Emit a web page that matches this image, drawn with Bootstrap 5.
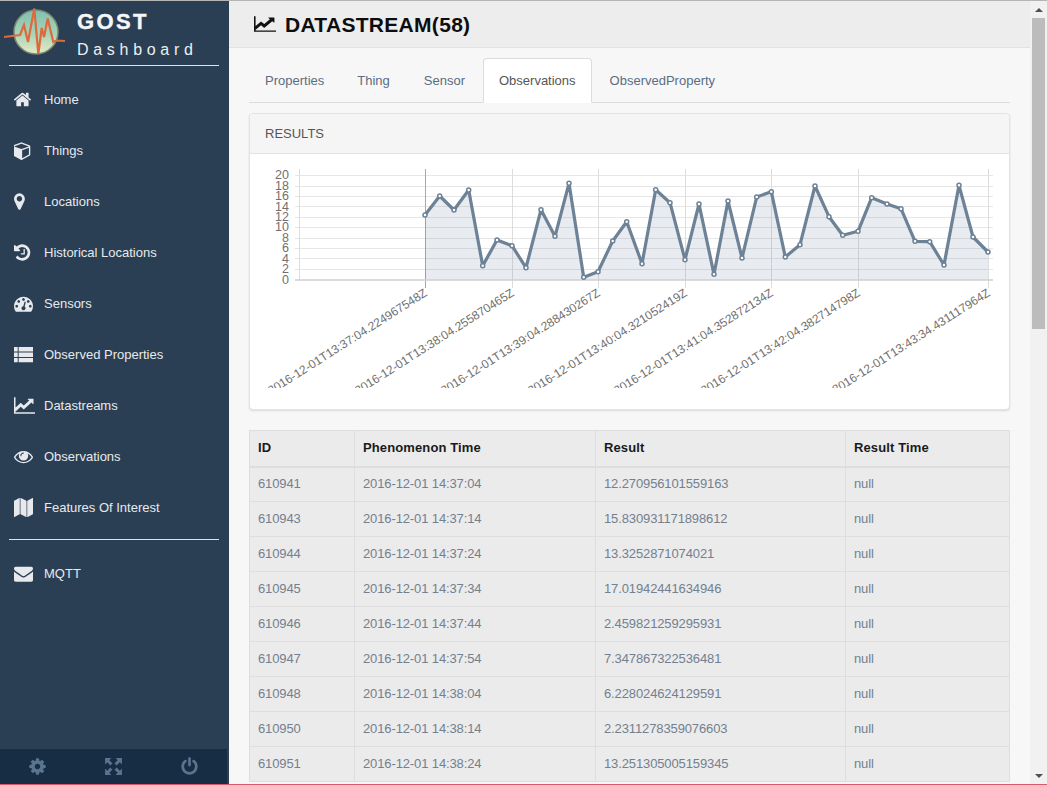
<!DOCTYPE html>
<html lang="en"><head><meta charset="utf-8"><title>GOST Dashboard</title>
<link rel="stylesheet" href="https://cdn.jsdelivr.net/npm/bootstrap@5.3.0/dist/css/bootstrap.min.css">
<style>
html,body{height:785px;overflow:hidden}
body{font-family:"Liberation Sans",Arial,sans-serif;font-size:13px;background:#f7f7f7;border-top:1px solid #b5b5b5;border-bottom:1px solid #d9596a}
.shell{height:783px}
.side{width:229px;background:#2a3f54;color:#ecf0f1}
.brand{height:64px}
.brand svg{width:74px;height:60px;flex:none}
.brand-txt{margin-left:3px;padding-top:8px}
.b-t{font-size:22px;font-weight:700;line-height:26px;letter-spacing:2.4px;color:#f4f6f7;-webkit-text-stroke:.4px #f4f6f7}
.b-s{font-size:16px;line-height:18px;margin-top:6px;letter-spacing:4.7px;color:#ecf0f1}
.rule{height:1px;background:#dfe3e6;margin:0 10px 0 9px;flex:none}
.rule.low{margin-top:6px}
.mnu{padding-top:8px}
.mi{height:51px;color:#e7e9ec;font-size:13px;text-decoration:none;padding-left:14px}
.mi svg{fill:#e7e9ec;width:19px;height:19px;flex:none;margin-right:11px}
.mi svg.wide{width:21px;margin-right:9px}
.sfoot{height:35px;background:#172d44;width:227px}
.sfoot svg{fill:#5a738e;width:19px;height:19px}
.sfoot span{width:76px}
.mainp{width:801px}
.head{height:47px;background:#ededed;border-bottom:1px solid #e2e2e2;padding-left:25px;flex:none}
.head svg{width:22px;height:18px;margin-right:9px;fill:#111}
.head h1{font-size:21px;font-weight:700;margin:1px 0 0;color:#0d0d0d;letter-spacing:.3px}
.wrap{padding:10px 20px 0;overflow:hidden}
.nav-tabs{border-bottom-color:#dcdcdc}
.nav-tabs .nav-link{font-size:13px;color:#5a6d82;padding:0 15px;height:45px;line-height:44px;margin-right:2px;border-radius:4px 4px 0 0}
.nav-tabs .nav-item:first-child .nav-link{margin-right:1px}
.nav-tabs .nav-link.active{color:#555;background:#fff;border-color:#dcdcdc #dcdcdc #fff}
.pnl{margin-top:10px;border-color:#e3e3e3;border-radius:4px;box-shadow:0 1px 2px rgba(0,0,0,.12);height:297px;flex:none}
.pnl .card-header{height:40px;padding:0 15px;line-height:39px;font-size:13px;color:#555;background:#f5f5f5;border-bottom-color:#e3e3e3}
.pnl svg{display:block}
.gl{stroke:#e6e6e6;stroke-width:1}
.gv{stroke:#dcdcdc;stroke-width:1}
.tk{font:12.5px "Liberation Sans",Arial,sans-serif;fill:#707070}
.tx{font:12px "Liberation Sans",Arial,sans-serif;fill:#707070}
.dtab{margin:20px 0 0;width:760px;table-layout:fixed;font-size:13px;--bs-table-bg:#ebebeb;--bs-table-color:#73808f;border-color:#dedede}
.dtab th{height:36px;padding:0 8px 2px;color:#1a1a1a;vertical-align:middle;border-bottom-width:2px;letter-spacing:.12px}
.dtab td{height:35px;padding:0 8px;vertical-align:middle;letter-spacing:-.12px}
.dtab tbody tr:first-child td{padding-bottom:2px}
.dtab thead tr{border-color:#dedede}
.sb{width:17px;background:#f1f1f1}
.sb-up,.sb-dn{height:17px;flex:none}
.sb-up i,.sb-dn i{width:0;height:0;border-left:4px solid transparent;border-right:4px solid transparent;display:block}
.sb-up i{border-bottom:4px solid #505050}
.sb-dn i{border-top:4px solid #505050}
.sb-th{width:13px;height:311px;background:#bcbcbc;margin:0 auto;flex:none}
</style></head>
<body>
<svg width="0" height="0" class="position-absolute">
<symbol id="i-home" viewBox="97 0 1792 1792"><path d="M1472 992v480q0 26-19 45t-45 19h-384v-384h-256v384h-384q-26 0-45-19t-19-45v-480q0-1 .5-3t.5-3l575-474 575 474q1 2 1 6zm223-69l-62 74q-8 9-21 11h-3q-13 0-21-7l-692-577-692 577q-12 8-24 7-13-2-21-11l-62-74q-8-10-7-23.5t11-21.5l719-599q32-26 76-26t76 26l244 204v-195q0-14 9-23t23-9h192q14 0 23 9t9 23v408l219 182q10 8 11 21.5t-7 23.5z"/></symbol>
<symbol id="i-cube" viewBox="128 0 1792 1792"><path d="M896 1629l640-349v-636l-640 233v752zm-64-865l698-254-698-254-698 254zm832-252v768q0 35-18 65t-49 47l-704 384q-28 16-61 16t-61-16l-704-384q-31-17-49-47t-18-65v-768q0-40 23-73t61-47l704-256q22-8 44-8t44 8l704 256q38 14 61 47t23 73z"/></symbol>
<symbol id="i-pin" viewBox="384 0 1792 1792"><path d="M1152 640q0-106-75-181t-181-75-181 75-75 181 75 181 181 75 181-75 75-181zm256 0q0 109-33 179l-364 774q-16 33-47.5 52t-67.5 19-67.5-19-46.5-52l-365-774q-33-70-33-179 0-212 150-362t362-150 362 150 150 362z"/></symbol>
<symbol id="i-hist" viewBox="128 0 1792 1792"><path d="M1664 896q0 156-61 298t-164 245-245 164-298 61q-172 0-327-72.5t-264-204.5q-7-10-6.5-22.5t8.5-20.5l137-138q10-9 25-9 16 2 23 12 73 95 179 147t225 52q104 0 198.5-40.5t163.5-109.5 109.5-163.5 40.5-198.5-40.5-198.5-109.5-163.5-163.5-109.5-198.5-40.5q-98 0-188 35.5t-160 101.5l137 138q31 30 14 69-17 40-59 40h-448q-26 0-45-19t-19-45v-448q0-42 40-59 39-17 69 14l130 129q107-101 244.5-156.5t284.5-55.5q156 0 298 61t245 164 164 245 61 298zm-512-288v448q0 14-9 23t-23 9h-320q-14 0-23-9t-9-23v-64q0-14 9-23t23-9h224v-352q0-14 9-23t23-9h64q14 0 23 9t9 23z"/></symbol>
<symbol id="i-dash" viewBox="0 0 1792 1792"><path d="M384 1152q0-53-37.5-90.5t-90.5-37.5-90.5 37.5-37.5 90.5 37.5 90.5 90.5 37.5 90.5-37.5 37.5-90.5zm192-448q0-53-37.5-90.5t-90.5-37.5-90.5 37.5-37.5 90.5 37.5 90.5 90.5 37.5 90.5-37.5 37.5-90.5zm428 481l101-382q6-26-7.5-48.5t-38.5-29.5-48 6.5-30 39.5l-101 382q-60 5-107 43.5t-63 98.5q-20 77 20 146t117 89 146-20 89-117q16-60-6-117t-72-91zm660-33q0-53-37.5-90.5t-90.5-37.5-90.5 37.5-37.5 90.5 37.5 90.5 90.5 37.5 90.5-37.5 37.5-90.5zm-640-640q0-53-37.5-90.5t-90.5-37.5-90.5 37.5-37.5 90.5 37.5 90.5 90.5 37.5 90.5-37.5 37.5-90.5zm448 192q0-53-37.5-90.5t-90.5-37.5-90.5 37.5-37.5 90.5 37.5 90.5 90.5 37.5 90.5-37.5 37.5-90.5zm320 448q0 261-141 483-19 29-54 29h-1402q-35 0-54-29-141-221-141-483 0-182 71-348t191-286 286-191 348-71 348 71 286 191 191 286 71 348z"/></symbol>
<symbol id="i-list" viewBox="0 0 1792 1792"><path d="M0 196h350v420H0zM440 196h1352v420H440zM0 706h350v420H0zM440 706h1352v420H440zM0 1216h350v420H0zM440 1216h1352v420H440z"/></symbol>
<symbol id="i-line" viewBox="0 0 1792 1792" preserveAspectRatio="none"><path d="M1792 1536v128h-1792v-1536h128v1408h1664zm-128-1248v435q0 21-19.5 29.5t-35.5-7.5l-121-121-633 633q-10 10-23 10t-23-10l-233-233-416 416-192-192 585-585q10-10 23-10t23 10l233 233 464-464-121-121q-16-16-7.5-35.5t29.5-19.5h435q14 0 23 9t9 23z"/></symbol>
<symbol id="i-eye" viewBox="0 0 1792 1792"><path d="M1664 960q-152-236-381-353 61 104 61 225 0 185-131.5 316.5t-316.5 131.5-316.5-131.5-131.5-316.5q0-121 61-225-229 117-381 353 133 205 333.5 326.5t434.5 121.5 434.5-121.5 333.5-326.5zm-720-384q0-20-14-34t-34-14q-125 0-214.5 89.5t-89.5 214.5q0 20 14 34t34 14 34-14 14-34q0-86 61-147t147-61q20 0 34-14t14-34zm848 384q0 34-20 69-140 230-376.5 368.5t-499.5 138.5-499.5-139-376.5-368q-20-35-20-69t20-69q140-229 376.5-368t499.5-139 499.5 139 376.5 368q20 35 20 69z"/></symbol>
<symbol id="i-map" viewBox="0 0 1792 1792"><path d="M512 0q13 0 22.5 9.5t9.5 22.5v1472q0 20-17 28l-480 256q-7 4-15 4-13 0-22.5-9.5t-9.5-22.5v-1472q0-20 17-28l480-256q7-4 15-4zm1248 0q13 0 22.5 9.5t9.5 22.5v1472q0 20-17 28l-480 256q-7 4-15 4-13 0-22.5-9.5t-9.5-22.5v-1472q0-20 17-28l480-256q7-4 15-4zm-1120 0q8 0 14 3l512 256q18 10 18 29v1472q0 13-9.5 22.5t-22.5 9.5q-8 0-14-3l-512-256q-18-10-18-29v-1472q0-13 9.5-22.5t22.5-9.5z"/></symbol>
<symbol id="i-mail" viewBox="0 0 1792 1792"><path d="M1792 710v794q0 66-47 113t-113 47h-1472q-66 0-113-47t-47-113v-794q44 49 101 87 362 246 497 345 57 42 92.5 65.5t94.5 48 110 24.5h2q51 0 110-24.5t94.5-48 92.5-65.5q170-123 498-345 57-39 100-87zm0-294q0 79-49 151t-122 123q-376 261-468 325-10 7-42.5 30.5t-54 38-52 32.5-57.5 27-50 9h-2q-23 0-50-9t-57.5-27-52-32.5-54-38-42.5-30.5q-91-64-262-182.5t-205-142.5q-62-42-117-115.5t-55-136.5q0-78 41.5-130t118.5-52h1472q65 0 112.5 45t47.5 115z"/></symbol>
<symbol id="i-cog" viewBox="0 0 1792 1792"><path d="M1152 896q0-106-75-181t-181-75-181 75-75 181 75 181 181 75 181-75 75-181zm512-109v222q0 12-8 23t-20 13l-185 28q-19 54-39 91 35 50 107 138 10 12 10 25t-9 23q-27 37-99 108t-94 71q-12 0-26-9l-138-108q-44 23-91 38-16 136-29 186-7 28-36 28h-222q-14 0-24.5-8.5t-11.5-21.5l-28-184q-49-16-90-37l-141 107q-10 9-25 9-14 0-25-11-126-114-165-168-7-10-7-23 0-12 8-23 15-21 51-66.5t54-70.5q-27-50-41-99l-183-27q-13-2-21-12.5t-8-23.5v-222q0-12 8-23t19-13l186-28q14-46 39-92-40-57-107-138-10-12-10-24 0-10 9-23 26-36 98.5-107.5t94.5-71.5q13 0 26 10l138 107q44-23 91-38 16-136 29-186 7-28 36-28h222q14 0 24.5 8.5t11.5 21.5l28 184q49 16 90 37l142-107q9-9 24-9 13 0 25 10 129 119 165 170 7 8 7 22 0 12-8 23-15 21-51 66.5t-54 70.5q26 50 41 98l183 28q13 2 21 12.5t8 23.5z"/></symbol>
<symbol id="i-full" viewBox="0 0 18 18"><path d="M1 1h6L5 3l3 3-2 2-3-3-2 2zM17 1v6l-2-2-3 3-2-2 3-3-2-2zM1 17v-6l2 2 3-3 2 2-3 3 2 2zM17 17h-6l2-2-3-3 2-2 3 3 2-2z"/></symbol>
<symbol id="i-pow" viewBox="0 0 1792 1792"><path d="M1664 896q0 156-61 298t-164 245-245 164-298 61-298-61-245-164-164-245-61-298q0-182 80.5-343t226.5-270q43-32 95.5-25t83.5 50q32 42 24.5 94.5t-49.5 84.5q-98 74-151.5 181t-53.5 228q0 104 40.5 198.5t109.5 163.5 163.5 109.5 198.5 40.5 198.5-40.5 163.5-109.5 109.5-163.5 40.5-198.5q0-121-53.5-228t-151.5-181q-42-32-49.5-84.5t24.5-94.5q31-43 84-50t95 25q146 109 226.5 270t80.5 343zm-640-768v640q0 52-38 90t-90 38-90-38-38-90v-640q0-52 38-90t90-38 90 38 38 90z"/></symbol>
</svg>
<div class="shell d-flex">
  <aside class="side d-flex flex-column flex-shrink-0">
    <div class="brand d-flex">
      <svg viewBox="0 0 74 60" aria-label="GOST logo">
        <defs><linearGradient id="lg" x1="0" y1="0" x2="0" y2="1"><stop offset="0" stop-color="#7fc0b0"/><stop offset=".55" stop-color="#a9d4b8"/><stop offset="1" stop-color="#e6eac6"/></linearGradient></defs>
        <circle cx="36" cy="31" r="22" fill="url(#lg)" stroke="#7c8a74" stroke-width="1.5"/>
        <polyline fill="none" stroke="#dc6a3c" stroke-width="2.2" points="4,36 20,34 24,24 28,41 34.300,7.500 38.300,53 41.700,27 44,36 47.700,17.500 53.300,41 56.700,39.500 65,40"/>
      </svg>
      <div class="brand-txt"><div class="b-t">GOST</div><div class="b-s">Dashboard</div></div>
    </div>
    <div class="rule"></div>
    <nav class="mnu nav flex-column flex-nowrap">
      <a class="mi d-flex align-items-center" href="#"><svg><use href="#i-home"/></svg>Home</a>
      <a class="mi d-flex align-items-center" href="#"><svg><use href="#i-cube"/></svg>Things</a>
      <a class="mi d-flex align-items-center" href="#"><svg><use href="#i-pin"/></svg>Locations</a>
      <a class="mi d-flex align-items-center" href="#"><svg><use href="#i-hist"/></svg>Historical Locations</a>
      <a class="mi d-flex align-items-center" href="#"><svg><use href="#i-dash"/></svg>Sensors</a>
      <a class="mi d-flex align-items-center" href="#"><svg><use href="#i-list"/></svg>Observed Properties</a>
      <a class="mi d-flex align-items-center" href="#"><svg class="wide"><use href="#i-line"/></svg>Datastreams</a>
      <a class="mi d-flex align-items-center" href="#"><svg><use href="#i-eye"/></svg>Observations</a>
      <a class="mi d-flex align-items-center" href="#"><svg><use href="#i-map"/></svg>Features Of Interest</a>
    </nav>
    <div class="rule low"></div>
    <nav class="mnu nav flex-column flex-nowrap">
      <a class="mi d-flex align-items-center" href="#"><svg><use href="#i-mail"/></svg>MQTT</a>
    </nav>
    <div class="sfoot d-flex align-items-center mt-auto">
      <span class="d-flex justify-content-center"><svg><use href="#i-cog"/></svg></span>
      <span class="d-flex justify-content-center"><svg><use href="#i-full"/></svg></span>
      <span class="d-flex justify-content-center"><svg><use href="#i-pow"/></svg></span>
    </div>
  </aside>
  <main class="mainp d-flex flex-column flex-shrink-0">
    <header class="head d-flex align-items-center"><svg><use href="#i-line"/></svg><h1>DATASTREAM(58)</h1></header>
    <div class="wrap flex-grow-1">
      <ul class="nav nav-tabs">
        <li class="nav-item"><a class="nav-link" href="#">Properties</a></li>
        <li class="nav-item"><a class="nav-link" href="#">Thing</a></li>
        <li class="nav-item"><a class="nav-link" href="#">Sensor</a></li>
        <li class="nav-item"><a class="nav-link active" href="#">Observations</a></li>
        <li class="nav-item"><a class="nav-link" href="#">ObservedProperty</a></li>
      </ul>
      <div class="card pnl">
        <div class="card-header">RESULTS</div>
        <div class="card-body p-0">
          <svg width="759" height="234" viewBox="250 154 759 234" aria-label="Results chart">
            <g>
              <line class="gl" x1="295" x2="993" y1="175.5" y2="175.5"/><line class="gl" x1="295" x2="993" y1="186.500" y2="186.500"/><line class="gl" x1="295" x2="993" y1="196.500" y2="196.500"/><line class="gl" x1="295" x2="993" y1="206.500" y2="206.500"/><line class="gl" x1="295" x2="993" y1="217.500" y2="217.500"/><line class="gl" x1="295" x2="993" y1="227.500" y2="227.500"/><line class="gl" x1="295" x2="993" y1="238.500" y2="238.500"/><line class="gl" x1="295" x2="993" y1="248.500" y2="248.500"/><line class="gl" x1="295" x2="993" y1="258.500" y2="258.500"/><line class="gl" x1="295" x2="993" y1="269.500" y2="269.500"/>
              <line class="gv" x1="299.500" x2="299.500" y1="169" y2="280"/><line class="gv" x1="512.500" x2="512.500" y1="169" y2="288"/><line class="gv" x1="598.500" x2="598.500" y1="169" y2="288"/><line class="gv" x1="685.500" x2="685.500" y1="169" y2="288"/><line class="gv" x1="771.500" x2="771.500" y1="169" y2="288"/><line class="gv" x1="858.500" x2="858.500" y1="169" y2="288"/><line class="gv" x1="988.500" x2="988.500" y1="169" y2="288"/>
              <line x1="425.500" x2="425.500" y1="169" y2="288" stroke="#a8a8a8"/>
            </g>
            <polygon fill="#5a738e" fill-opacity=".14" points="425,280 425,215 439.700,196 454,210 468.700,190 482.700,265.700 497,240 512,245.700 526,267.700 541,209.700 555,236.300 569,183.300 583.700,277.300 598,271.700 612.700,241 626.700,221.700 642,263.700 655.700,189.700 670,202.700 685,259.700 699,204 714,274.300 728,201 742,258 756.700,197 771.300,191.700 785.300,257 800,244.700 815,186 829,216.700 842.700,235.300 858,231.300 871.700,197.700 887,204 901,208.700 915,241.300 929.700,241.700 944,265 959,185.300 973,237 988,252 988,280"/>
            <line x1="295" x2="993" y1="280" y2="280" stroke="#cfcfcf" stroke-width="1.500"/>
            <polyline fill="none" stroke="#6d8296" stroke-width="3.200" stroke-linejoin="round" points="425,215 439.700,196 454,210 468.700,190 482.700,265.700 497,240 512,245.700 526,267.700 541,209.700 555,236.300 569,183.300 583.700,277.300 598,271.700 612.700,241 626.700,221.700 642,263.700 655.700,189.700 670,202.700 685,259.700 699,204 714,274.300 728,201 742,258 756.700,197 771.300,191.700 785.300,257 800,244.700 815,186 829,216.700 842.700,235.300 858,231.300 871.700,197.700 887,204 901,208.700 915,241.300 929.700,241.700 944,265 959,185.300 973,237 988,252"/>
            <g fill="#fff" stroke="#6d8296" stroke-width="1.500">
              <circle r="2" cx="425" cy="215"/><circle r="2" cx="439.700" cy="196"/><circle r="2" cx="454" cy="210"/><circle r="2" cx="468.700" cy="190"/><circle r="2" cx="482.700" cy="265.700"/><circle r="2" cx="497" cy="240"/><circle r="2" cx="512" cy="245.700"/><circle r="2" cx="526" cy="267.700"/><circle r="2" cx="541" cy="209.700"/><circle r="2" cx="555" cy="236.300"/><circle r="2" cx="569" cy="183.300"/><circle r="2" cx="583.700" cy="277.300"/><circle r="2" cx="598" cy="271.700"/><circle r="2" cx="612.700" cy="241"/><circle r="2" cx="626.700" cy="221.700"/><circle r="2" cx="642" cy="263.700"/><circle r="2" cx="655.700" cy="189.700"/><circle r="2" cx="670" cy="202.700"/><circle r="2" cx="685" cy="259.700"/><circle r="2" cx="699" cy="204"/><circle r="2" cx="714" cy="274.300"/><circle r="2" cx="728" cy="201"/><circle r="2" cx="742" cy="258"/><circle r="2" cx="756.700" cy="197"/><circle r="2" cx="771.300" cy="191.700"/><circle r="2" cx="785.300" cy="257"/><circle r="2" cx="800" cy="244.700"/><circle r="2" cx="815" cy="186"/><circle r="2" cx="829" cy="216.700"/><circle r="2" cx="842.700" cy="235.300"/><circle r="2" cx="858" cy="231.300"/><circle r="2" cx="871.700" cy="197.700"/><circle r="2" cx="887" cy="204"/><circle r="2" cx="901" cy="208.700"/><circle r="2" cx="915" cy="241.300"/><circle r="2" cx="929.700" cy="241.700"/><circle r="2" cx="944" cy="265"/><circle r="2" cx="959" cy="185.300"/><circle r="2" cx="973" cy="237"/><circle r="2" cx="988" cy="252"/>
            </g>
            <g class="tk" text-anchor="end">
              <text x="289" y="179">20</text><text x="289" y="189.500">18</text><text x="289" y="200">16</text><text x="289" y="210.500">14</text><text x="289" y="221">12</text><text x="289" y="231">10</text><text x="289" y="241.500">8</text><text x="289" y="252">6</text><text x="289" y="262.500">4</text><text x="289" y="273">2</text><text x="289" y="283.500">0</text>
            </g>
            <g class="tx" text-anchor="end">
              <text transform="translate(428 295) rotate(-32.500)">2016-12-01T13:37:04.224967548Z</text>
              <text transform="translate(515 295) rotate(-32.500)">2016-12-01T13:38:04.255870465Z</text>
              <text transform="translate(601 295) rotate(-32.500)">2016-12-01T13:39:04.288430267Z</text>
              <text transform="translate(688 295) rotate(-32.500)">2016-12-01T13:40:04.321052419Z</text>
              <text transform="translate(774 295) rotate(-32.500)">2016-12-01T13:41:04.352872134Z</text>
              <text transform="translate(861 295) rotate(-32.500)">2016-12-01T13:42:04.382714798Z</text>
              <text transform="translate(991 295) rotate(-32.500)">2016-12-01T13:43:34.431117964Z</text>
            </g>
          </svg>
        </div>
      </div>
      <table class="table table-bordered dtab">
        <colgroup><col style="width:105px"><col style="width:241px"><col style="width:250px"><col style="width:164px"></colgroup>
        <thead><tr><th>ID</th><th>Phenomenon Time</th><th>Result</th><th>Result Time</th></tr></thead>
        <tbody>
          <tr><td>610941</td><td>2016-12-01 14:37:04</td><td>12.270956101559163</td><td>null</td></tr>
          <tr><td>610943</td><td>2016-12-01 14:37:14</td><td>15.830931171898612</td><td>null</td></tr>
          <tr><td>610944</td><td>2016-12-01 14:37:24</td><td>13.3252871074021</td><td>null</td></tr>
          <tr><td>610945</td><td>2016-12-01 14:37:34</td><td>17.01942441634946</td><td>null</td></tr>
          <tr><td>610946</td><td>2016-12-01 14:37:44</td><td>2.459821259295931</td><td>null</td></tr>
          <tr><td>610947</td><td>2016-12-01 14:37:54</td><td>7.347867322536481</td><td>null</td></tr>
          <tr><td>610948</td><td>2016-12-01 14:38:04</td><td>6.228024624129591</td><td>null</td></tr>
          <tr><td>610950</td><td>2016-12-01 14:38:14</td><td>2.2311278359076603</td><td>null</td></tr>
          <tr><td>610951</td><td>2016-12-01 14:38:24</td><td>13.251305005159345</td><td>null</td></tr>
        </tbody>
      </table>
    </div>
  </main>
  <div class="sb d-flex flex-column flex-shrink-0">
    <div class="sb-up d-flex align-items-center justify-content-center"><i></i></div>
    <div class="sb-th"></div>
    <div class="sb-dn d-flex align-items-center justify-content-center mt-auto"><i></i></div>
  </div>
</div>
<script src="https://cdn.jsdelivr.net/npm/bootstrap@5.3.0/dist/js/bootstrap.bundle.min.js"></script>
</body></html>
